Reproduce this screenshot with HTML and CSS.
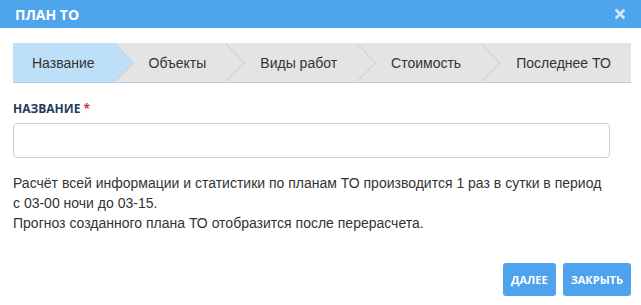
FILE: index.html
```html
<!DOCTYPE html>
<html lang="ru">
<head>
    <meta charset="UTF-8">
    <meta name="viewport" content="width=device-width, initial-scale=1.0">
    <title>План ТО</title>
    <link rel="stylesheet" href="styles.css">
</head>
<body>

    <!-- Modal header -->
    <div class="modal-header">
        <span class="modal-title">ПЛАН ТО</span>
        <span class="modal-close">
            <svg width="10" height="10" viewBox="0 0 10 10">
                <path d="M1.5 1.5 L8.5 8.5 M8.5 1.5 L1.5 8.5" stroke="#fff" stroke-width="2.6" stroke-linecap="square"/>
            </svg>
        </span>
    </div>

    <div class="modal-body">
        <!-- Wizard steps -->
        <div class="steps">
            <div class="step active">Название</div>
            <div class="step">Объекты</div>
            <div class="step">Виды работ</div>
            <div class="step">Стоимость</div>
            <div class="step">Последнее ТО</div>
        </div>

        <div class="form-area">
            <label class="field-label">НАЗВАНИЕ <span class="required">*</span></label>
            <input type="text" class="field-input">

            <p class="info">Расчёт всей информации и статистики по планам ТО производится 1 раз в сутки в период<br>с 03-00 ночи до 03-15.<br>Прогноз созданного плана ТО отобразится после перерасчета.</p>
        </div>

        <div class="modal-footer">
            <button class="btn">ДАЛЕЕ</button>
            <button class="btn">ЗАКРЫТЬ</button>
        </div>
    </div>

</body>
</html>
```

FILE: styles.css
```css
body {margin: 0;padding: 0;background: #fff;font-family: "Liberation Sans", Arial, sans-serif;color: #333;}
*, *::before, *::after {box-sizing: border-box;}

.modal-header {display: flex;align-items: center;justify-content: space-between;height: 28px;padding: 0 16px 0 15px;background-color: #4fa5ec;}
.modal-title {font-family: "Open Sans", sans-serif;font-weight: 700;font-size: 14px;color: #fff;}
.modal-close {display: flex;opacity: 0.75;margin-top: -1px;}

.modal-body {padding: 15px 10px 0 13px;}

.steps {display: flex;height: 40px;background-color: #e4e4e4;border-bottom: 1px solid #b8cce4;}
.step {position: relative;display: flex;align-items: center;padding: 0 20px 0 34px;font-size: 14px;color: #333;background-color: #e4e4e4;white-space: nowrap;}
.step:first-child {padding-left: 19px;}
.step:last-child {flex: 1;padding-left: 35px;}
.step.active {background-color: #bde0f8;}
.step:not(:last-child)::before {content: "";position: absolute;top: 0;right: -19px;border-top: 20px solid transparent;border-bottom: 19px solid transparent;border-left: 19px solid #c9c9c9;z-index: 1;}
.step:not(:last-child)::after {content: "";position: absolute;top: 0;right: -18px;border-top: 20px solid transparent;border-bottom: 19px solid transparent;border-left: 19px solid #e4e4e4;z-index: 2;}
.step.active::after {border-left-color: #bde0f8;}

.form-area {padding-right: 21px;}
.field-label {display: block;margin-top: 17px;font-family: "Open Sans", sans-serif;font-weight: 700;font-size: 12px;line-height: 17px;color: #1f3b5c;}
.required {color: #c0392b;}
.field-input {display: block;width: 100%;height: 35px;margin-top: 6px;border: 1px solid #cfcfcf;border-radius: 4px;padding: 0 10px;font-size: 14px;}
.info {margin: 15px 0 0;font-size: 14px;line-height: 20px;color: #333;}

.modal-footer {display: flex;justify-content: flex-end;gap: 7px;margin-top: 30px;}
.btn {height: 33px;padding: 0 8px;border: none;border-radius: 3px;background-color: #4fa3ee;color: #fff;font-family: "Open Sans", sans-serif;font-weight: 700;font-size: 11px;cursor: pointer;}
```
